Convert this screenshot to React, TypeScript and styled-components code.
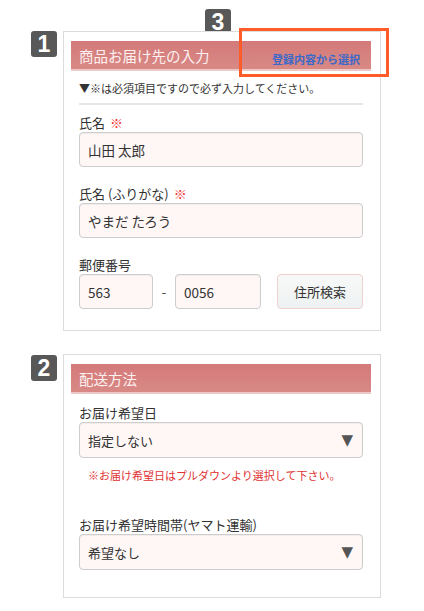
import React from "react";
import styled, { createGlobalStyle } from "styled-components";

const Global = createGlobalStyle`
  html, body { margin: 0; padding: 0; background: #fff; }
  body { font-family: "Noto Sans CJK JP", "Noto Sans", sans-serif; color: #333; }
  * { box-sizing: border-box; }
`;

const Page = styled.div`
  position: relative;
  width: 424px;
  height: 611px;
  padding: 31px 0 0 63px;
  overflow: hidden;
`;

const Section = styled.div<{ $gap?: number }>`
  position: relative;
  width: 318px;
  margin-bottom: ${(p) => p.$gap ?? 0}px;
`;

const Badge = styled.div<{ $left: number; $top: number }>`
  position: absolute;
  left: ${(p) => p.$left}px;
  top: ${(p) => p.$top}px;
  width: 26px;
  height: 26px;
  background: #585858;
  border-radius: 3px;
  color: #fff;
  font-family: "Liberation Sans", Arial, sans-serif;
  font-weight: bold;
  font-size: 23px;
  line-height: 27px;
  text-align: center;
  z-index: 0;
`;

const Highlight = styled.div`
  position: absolute;
  left: 176px;
  top: -3px;
  width: 150px;
  height: 49px;
  border: 3px solid #ff5c2a;
  z-index: 3;
`;

const Card = styled.div<{ $pb: number }>`
  position: relative;
  z-index: 1;
  background: #fff;
  border: 1px solid #dcdcdc;
  padding: 9px 0 ${(p) => p.$pb}px 7px;
`;

const Header = styled.div`
  width: 300px;
  height: 30px;
  background: linear-gradient(#d47a7a, #d88985);
  border-bottom: 2px solid #ecc9c7;
  display: flex;
  justify-content: space-between;
  align-items: center;
  padding: 0 11px 0 8px;
`;

const HeaderTitle = styled.div`
  color: #fdf0f0;
  font-size: 14.5px;
  line-height: 20px;
  margin-top: 1px;
`;

const HeaderLink = styled.div`
  align-self: flex-end;
  color: #3b69c9;
  font-size: 11px;
  font-weight: bold;
  line-height: 14px;
  margin-bottom: 3px;
`;

const Body = styled.div<{ $pt: number }>`
  width: 284px;
  margin-left: 8px;
  padding-top: ${(p) => p.$pt}px;
`;

const Note = styled.div`
  font-size: 11px;
  line-height: 18px;
  color: #333;
`;

const Divider = styled.div`
  height: 2px;
  background: #e6e6e6;
  margin: 6px 0 9px;
`;

const Field = styled.div<{ $mb?: number }>`
  margin-bottom: ${(p) => p.$mb ?? 18}px;
`;

const Label = styled.div`
  font-size: 13px;
  line-height: 18px;
  color: #333;
`;

const Req = styled.span`
  color: #f23a3a;
  margin-left: 5px;
`;

const Input = styled.div<{ $w?: number }>`
  width: ${(p) => (p.$w ? `${p.$w}px` : "100%")};
  height: 35px;
  background: #fff6f6;
  border: 1.5px solid #cdcdcd;
  border-radius: 4px;
  box-shadow: inset 0 1px 1px rgba(0, 0, 0, 0.05);
  padding: 0 8px;
  display: flex;
  align-items: center;
  font-size: 13.5px;
  color: #333;
`;

const SelectBox = styled(Input)`
  justify-content: space-between;
  height: 36px;
  padding-right: 9px;
  font-size: 13px;
`;

const Arrow = styled.span`
  color: #555;
  font-size: 15px;
  font-family: "DejaVu Sans", sans-serif;
`;

const ZipRow = styled.div`
  display: flex;
  align-items: center;
`;

const Dash = styled.span`
  width: 22px;
  text-align: center;
  font-size: 13px;
  color: #444;
`;

const SearchButton = styled.div`
  margin-left: auto;
  width: 86px;
  height: 35px;
  border: 1px solid #f0cfcf;
  border-radius: 4px;
  background: linear-gradient(#f8f8f8, #eef2f2);
  display: flex;
  align-items: center;
  justify-content: center;
  font-size: 13px;
  color: #333;
`;

const RedNote = styled.div`
  color: #e03232;
  font-size: 11px;
  line-height: 18px;
  margin: 8px 0 0 9px;
`;

export default function App() {
  return (
    <>
      <Global />
      <Page>
        <Section $gap={23}>
          <Badge $left={-32} $top={0}>1</Badge>
          <Badge $left={142} $top={-22}>3</Badge>
          <Highlight />
          <Card $pb={21}>
            <Header>
              <HeaderTitle>商品お届け先の入力</HeaderTitle>
              <HeaderLink>登録内容から選択</HeaderLink>
            </Header>
            <Body $pt={8}>
              <Note>▼※は必須項目ですので必ず入力してください。</Note>
              <Divider />
              <Field>
                <Label>
                  氏名<Req>※</Req>
                </Label>
                <Input>山田 太郎</Input>
              </Field>
              <Field>
                <Label>
                  氏名 (ふりがな)<Req>※</Req>
                </Label>
                <Input>やまだ たろう</Input>
              </Field>
              <Field $mb={0}>
                <Label>郵便番号</Label>
                <ZipRow>
                  <Input $w={74}>563</Input>
                  <Dash>-</Dash>
                  <Input $w={86}>0056</Input>
                  <SearchButton>住所検索</SearchButton>
                </ZipRow>
              </Field>
            </Body>
          </Card>
        </Section>
        <Section>
          <Badge $left={-32} $top={1}>2</Badge>
          <Card $pb={27}>
            <Header>
              <HeaderTitle>配送方法</HeaderTitle>
            </Header>
            <Body $pt={10}>
              <Field $mb={32}>
                <Label>お届け希望日</Label>
                <SelectBox>
                  <span>指定しない</span>
                  <Arrow>▼</Arrow>
                </SelectBox>
                <RedNote>※お届け希望日はプルダウンより選択して下さい。</RedNote>
              </Field>
              <Field $mb={0}>
                <Label>お届け希望時間帯(ヤマト運輸)</Label>
                <SelectBox>
                  <span>希望なし</span>
                  <Arrow>▼</Arrow>
                </SelectBox>
              </Field>
            </Body>
          </Card>
        </Section>
      </Page>
    </>
  );
}
